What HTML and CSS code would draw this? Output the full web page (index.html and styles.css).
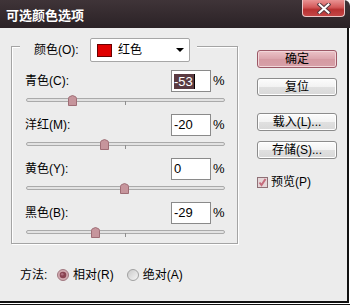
FILE: index.html
```html
<!DOCTYPE html>
<html lang="zh-CN">
<head>
<meta charset="utf-8">
<title>可选颜色选项</title>
<link rel="stylesheet" href="styles.css">
</head>
<body>
<div class="window">
  <div class="titlebar">
    <span class="title">可选颜色选项</span>
    <div class="close">
      <svg width="14" height="11" viewBox="0 0 14 11">
        <path d="M2.5 1.5 L11.5 9.5 M11.5 1.5 L2.5 9.5" stroke="#5a3a40" stroke-width="4" stroke-linecap="square" fill="none"/>
        <path d="M2.5 1.5 L11.5 9.5 M11.5 1.5 L2.5 9.5" stroke="#ffffff" stroke-width="2" stroke-linecap="square" fill="none"/>
      </svg>
    </div>
  </div>
  <div class="frame">
    <div class="left">
      <div class="group">
        <div class="legend">
          <span class="legend-label">颜色(O):</span>
          <div class="select">
            <span class="swatch"></span>
            <span class="select-text">红色</span>
            <svg class="arrow" width="8" height="4" viewBox="0 0 8 4"><path d="M0 0 H8 L4 4 Z" fill="#000"/></svg>
          </div>
        </div>
        <div class="block">
          <div class="row"><span class="label">青色(C):</span><span class="input"><span class="sel">-53</span><span class="caret"></span></span><span class="pct">%</span></div>
          <div class="slider"><div class="track"></div><div class="tick"></div><svg class="thumb" style="left:42px" width="9" height="11" viewBox="0 0 9 11"><path d="M0.5 3.5 Q0.5 2 2 1.5 L4.5 0.5 L7 1.5 Q8.5 2 8.5 3.5 V10.5 H0.5 Z" fill="#c6959c" stroke="#9f6d75"/></svg></div>
        </div>
        <div class="block">
          <div class="row"><span class="label">洋红(M):</span><span class="input">-20</span><span class="pct">%</span></div>
          <div class="slider"><div class="track"></div><div class="tick"></div><svg class="thumb" style="left:74px" width="9" height="11" viewBox="0 0 9 11"><path d="M0.5 3.5 Q0.5 2 2 1.5 L4.5 0.5 L7 1.5 Q8.5 2 8.5 3.5 V10.5 H0.5 Z" fill="#c6959c" stroke="#9f6d75"/></svg></div>
        </div>
        <div class="block">
          <div class="row"><span class="label">黄色(Y):</span><span class="input">0</span><span class="pct">%</span></div>
          <div class="slider"><div class="track"></div><div class="tick"></div><svg class="thumb" style="left:94px" width="9" height="11" viewBox="0 0 9 11"><path d="M0.5 3.5 Q0.5 2 2 1.5 L4.5 0.5 L7 1.5 Q8.5 2 8.5 3.5 V10.5 H0.5 Z" fill="#c6959c" stroke="#9f6d75"/></svg></div>
        </div>
        <div class="block">
          <div class="row"><span class="label">黑色(B):</span><span class="input">-29</span><span class="pct">%</span></div>
          <div class="slider"><div class="track"></div><div class="tick"></div><svg class="thumb" style="left:65px" width="9" height="11" viewBox="0 0 9 11"><path d="M0.5 3.5 Q0.5 2 2 1.5 L4.5 0.5 L7 1.5 Q8.5 2 8.5 3.5 V10.5 H0.5 Z" fill="#c6959c" stroke="#9f6d75"/></svg></div>
        </div>
      </div>
      <div class="method">
        <span class="method-label">方法:</span>
        <span class="radio-item">
          <svg class="radio" width="12" height="12" viewBox="0 0 12 12"><circle cx="6" cy="6" r="5.5" fill="#d2aab0" stroke="#a07880"/><circle cx="6" cy="6" r="3.3" fill="#8a4452"/><circle cx="5.2" cy="5.2" r="1.3" fill="#b07080"/></svg>
          <span>相对(R)</span>
        </span>
        <span class="radio-item">
          <svg class="radio" width="12" height="12" viewBox="0 0 12 12"><defs><linearGradient id="rg" x1="0" y1="0" x2="1" y2="1"><stop offset="0" stop-color="#c8c8c8"/><stop offset="1" stop-color="#f8f8f8"/></linearGradient></defs><circle cx="6" cy="6" r="5.5" fill="url(#rg)" stroke="#a0a0a0"/></svg>
          <span>绝对(A)</span>
        </span>
      </div>
    </div>
    <div class="right">
      <div class="btn primary">确定</div>
      <div class="btn">复位</div>
      <div class="btn gap-lg">载入(L)...</div>
      <div class="btn">存储(S)...</div>
      <div class="check-item">
        <svg class="check" width="11" height="11" viewBox="0 0 11 11"><rect x="0.5" y="0.5" width="10" height="10" fill="#e6d6d8" stroke="#8e7076"/><path d="M2.5 5.5 L4.5 8 L8.5 2" stroke="#c56c7c" stroke-width="2" fill="none"/></svg>
        <span>预览(P)</span>
      </div>
    </div>
  </div>
</div>
</body>
</html>
```
FILE: styles.css
```css
* { box-sizing: border-box; }
html, body { margin: 0; padding: 0; }
body {
  width: 350px;
  height: 305px;
  overflow: hidden;
  background: #fff;
  font-family: "Liberation Sans", "Noto Sans CJK SC", sans-serif;
  font-size: 12px;
  color: #000;
}
.window {
  width: 350px;
  height: 305px;
  display: flex;
  flex-direction: column;
  border-bottom: 1px solid #111;
}
.titlebar {
  height: 28px;
  flex: none;
  display: flex;
  align-items: flex-start;
  background: linear-gradient(#3f3438, #2b2226);
  border-top-right-radius: 6px;
}
.title {
  margin: 6px 0 0 6px;
  color: #fff;
  font-weight: bold;
  font-size: 13px;
  line-height: 18px;
  font-family: "Noto Sans CJK SC", sans-serif;
}
.close {
  margin-left: auto;
  margin-right: 5px;
  width: 43px;
  height: 17px;
  border: 1px solid #ecc8c8;
  border-top: none;
  border-radius: 0 0 4px 4px;
  background: linear-gradient(#e99393, #d45a5a 45%, #b83232 60%, #c44646);
  display: flex;
  align-items: center;
  justify-content: center;
}
.frame {
  flex: none;
  width: 349px;
  height: 275px;
  background: #ececec;
  border-right: 2px solid #111;
  border-bottom: 2px solid #111;
  display: flex;
  align-items: flex-start;
}
.left {
  width: 238px;
  padding-top: 18px;
}
.group {
  margin-left: 11px;
  width: 227px;
  border: 1px solid #a4a4a4;
  box-shadow: 1px 1px 0 #fff, inset 1px 1px 0 #fff;
  padding-bottom: 5px;
}
.legend {
  margin: -9px 0 0 8px;
  width: fit-content;
  height: 24px;
  padding: 0 7px 0 14px;
  background: #ececec;
  display: flex;
  align-items: center;
}
.legend-label {
  width: 56px;
  line-height: 14px;
}
.select {
  width: 100px;
  height: 24px;
  background: #fff;
  border: 1px solid #a6a6a6;
  border-radius: 2px;
  display: flex;
  align-items: center;
  padding-left: 6px;
}
.swatch {
  width: 15px;
  height: 13px;
  background: #e00000;
  border: 1px solid #6a0000;
}
.select-text {
  margin-left: 6px;
  line-height: 14px;
}
.arrow {
  margin-left: auto;
  margin-right: 5px;
}
.block {
  margin-top: 8px;
}
.row {
  height: 22px;
  display: flex;
  align-items: center;
}
.label {
  width: 159px;
  padding-left: 13px;
  line-height: 14px;
}
.input {
  width: 40px;
  height: 22px;
  background: #fff;
  border: 1px solid #8a8a8a;
  padding-left: 2px;
  display: flex;
  align-items: center;
  font-family: "Liberation Sans", sans-serif;
  font-size: 13px;
  line-height: 14px;
}
.sel {
  background: #5a3a41;
  color: #fff;
  height: 15px;
  padding-right: 1px;
  line-height: 15px;
}
.caret {
  width: 1px;
  height: 15px;
  background: #000;
}
.pct {
  margin-left: 2px;
  font-size: 13px;
  line-height: 14px;
}
.slider {
  position: relative;
  height: 14px;
  margin-left: 14px;
  width: 199px;
}
.track {
  position: absolute;
  left: 0;
  right: 0;
  top: 6px;
  height: 4px;
  border: 1px solid #aaaaaa;
  border-radius: 2px;
  background: #e2e2e2;
}
.tick {
  position: absolute;
  left: 99px;
  top: 9px;
  width: 1px;
  height: 4px;
  background: #8e8e8e;
}
.thumb {
  position: absolute;
  top: 3px;
}
.method {
  margin-top: 24px;
  padding-left: 20px;
  display: flex;
  align-items: center;
  height: 14px;
  line-height: 14px;
}
.method-label {
  width: 37px;
}
.radio-item {
  display: flex;
  align-items: center;
  margin-right: 13px;
}
.radio {
  margin-right: 4px;
}
.right {
  margin-left: 19px;
  padding-top: 22px;
  display: flex;
  flex-direction: column;
  gap: 10px;
}
.btn {
  width: 80px;
  height: 18px;
  border: 1px solid #8c8c8c;
  border-radius: 3px;
  background: linear-gradient(#fcfcfc, #f2f2f2 50%, #e0e0e0 52%, #d8d8d8);
  box-shadow: inset 0 0 0 1px #fff;
  text-align: center;
  line-height: 16px;
  font-size: 12px;
}
.btn.primary {
  border-color: #9c5866;
  background: linear-gradient(#ebc3c8, #dba4ac 50%, #d59aa2 52%, #d7a0a8);
  box-shadow: inset 0 0 0 1px #f2d6d9;
}
.gap-lg {
  margin-top: 7px;
}
.check-item {
  margin-top: 6px;
  display: flex;
  align-items: center;
  line-height: 14px;
}
.check {
  margin-right: 3px;
}
```
